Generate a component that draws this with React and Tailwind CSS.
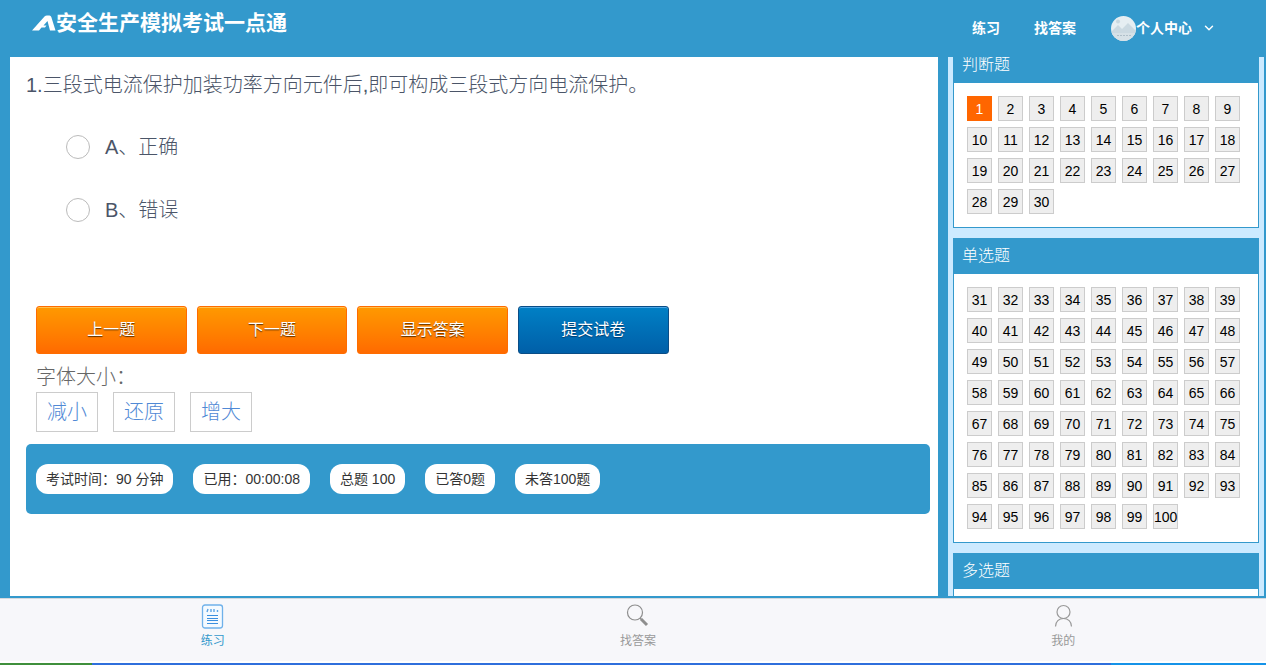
import React, { useState } from 'react';
import clsx from 'clsx';
import { ChevronDown } from 'lucide-react';

const range = (from, to) => Array.from({ length: to - from + 1 }, (_, i) => from + i);

const sections = [
  { title: '判断题', numbers: range(1, 30) },
  { title: '单选题', numbers: range(31, 100) },
  { title: '多选题', numbers: [] },
];

const options = [
  { key: 'A', label: '正确' },
  { key: 'B', label: '错误' },
];

const stats = ['考试时间：90 分钟', '已用：00:00:08', '总题 100', '已答0题', '未答100题'];

function LogoMark() {
  return (
    <svg className="w-6 h-4" viewBox="0 0 24 16" fill="#fff">
      <path d="M0 15.500L12.500 1.500Q13.500 .5 15 .5H17.500Q18.800 .5 19.300 2L23.500 15.500H18L15.500 6L11.500 10.500H14.500L13 12.500H9.500L7 15.500Z" />
    </svg>
  );
}

function Avatar() {
  return (
    <svg className="w-[25px] h-[25px]" viewBox="0 0 25 25">
      <defs>
        <clipPath id="avatar">
          <circle cx="12.500" cy="12.500" r="12.500" />
        </clipPath>
      </defs>
      <g clipPath="url(#avatar)">
        <rect width="25" height="25" fill="#e6eef2" />
        <circle cx="7" cy="5.500" r="2" fill="#c9d8e0" />
        <path d="M0 16L7 9l4 4 6-6 8 8v10H0z" fill="#cbd9e1" />
        <path d="M0 17h25v8H0z" fill="#d6e1e7" />
        <path d="M6 19.500h14" stroke="#afbfc9" strokeDasharray="2 1" />
      </g>
    </svg>
  );
}

function PaperIcon() {
  return (
    <svg className="w-[25px] h-[25px]" viewBox="0 0 25 25" fill="none">
      <rect x="2.500" y="1" width="20" height="23" rx="2.500" fill="#f4faff" stroke="#6fb1ea" strokeWidth="1.300" />
      <path d="M8 5l-1 3M11 5v3M14 5v3M17.500 6v2" stroke="#5ba4e6" strokeWidth="1.400" />
      <path d="M7 11.500h11M7 14.500h11M7 16.500h11M7 19.500h11" stroke="#3a8fe0" strokeWidth="1.200" />
    </svg>
  );
}

function SearchIcon() {
  return (
    <svg className="w-[25px] h-[25px]" viewBox="0 0 25 25" fill="none" stroke="#8e8e8e">
      <circle cx="10" cy="8.500" r="7.500" strokeWidth="1.200" />
      <path d="M15 14l2 2" strokeWidth="1.500" />
      <path d="M16 15l6 6" strokeWidth="3" />
    </svg>
  );
}

function UserIcon() {
  return (
    <svg className="w-[25px] h-[25px]" viewBox="0 0 25 25" fill="none" stroke="#999" strokeWidth="1.200">
      <circle cx="12.500" cy="8" r="6.500" />
      <path d="M4.500 22.500c0-5 3.500-8 8-8s8 3 8 8" />
    </svg>
  );
}

const tabs = [
  { label: '练习', icon: PaperIcon, active: true },
  { label: '找答案', icon: SearchIcon },
  { label: '我的', icon: UserIcon },
];

function ActionButton({ children, primary }) {
  return (
    <button
      className={clsx(
        'w-1/6 h-12 ml-2.5 rounded-[3px] border text-base text-white bg-linear-to-b',
        primary
          ? 'border-[#0a4d86] from-[#0080c5] to-[#005fa8] shadow-[inset_0_1px_0_#4aa5e6] [text-shadow:0_1px_1px_#003a6b]'
          : 'border-[#ff6c00] from-[#ff9900] to-[#ff6a00] shadow-[inset_0_1px_0_#ffc04d] [text-shadow:0_1px_1px_#5c3000]'
      )}
    >
      {children}
    </button>
  );
}

function NumberPanel({ title, numbers, current, onSelect }) {
  return (
    <section className="bg-white border border-t-0 border-[#3399cc]">
      <h2 className="h-9 px-2 leading-9 text-base font-light text-white bg-[#3399cc]">{title}</h2>
      <div className="flex flex-wrap gap-1.5 p-[13px]">
        {numbers.map((n) => (
          <button
            key={n}
            onClick={() => onSelect(n)}
            className={clsx(
              'w-[25px] h-[25px] border text-sm',
              n === current ? 'bg-[#ff6600] border-[#ff6600] text-white' : 'bg-[#eeeeee] border-[#cccccc] text-black'
            )}
          >
            {n}
          </button>
        ))}
      </div>
    </section>
  );
}

export default function App() {
  const [current, setCurrent] = useState(1);
  const [answer, setAnswer] = useState('');

  return (
    <div className="h-screen flex flex-col overflow-hidden bg-[#3399cc] font-['Liberation_Sans','Noto_Sans_CJK_SC',sans-serif]">
      <header className="h-[57px] shrink-0 flex justify-between pl-8 pr-[50px] text-white">
        <h1 className="h-[46px] flex items-center text-[21px] font-bold">
          <LogoMark />
          安全生产模拟考试一点通
        </h1>
        <nav className="flex items-center h-14 text-sm font-bold">
          <a href="#practice" className="mr-[34px]">练习</a>
          <a href="#search" className="mr-[35px]">找答案</a>
          <a href="#center" className="flex items-center">
            <Avatar />
            个人中心
            <ChevronDown className="ml-2.5 w-3.5 h-3.5" strokeWidth={2.5} />
          </a>
        </nav>
      </header>

      <div className="flex-1 min-h-0 flex gap-2.5 pl-2.5 pr-0.5">
        <main className="flex-1 min-w-0 bg-white pl-4 pr-2 pt-3 overflow-hidden">
          <p className="text-xl leading-8 font-light text-[#4b5568]">
            1.三段式电流保护加装功率方向元件后,即可构成三段式方向电流保护。
          </p>
          <div className="pl-10 pt-[31px] pb-[65px] flex flex-col gap-[33px]">
            {options.map((o) => (
              <label key={o.key} className="flex items-center text-xl leading-[30px] font-light text-[#4b5568]">
                <input
                  type="radio"
                  name="answer"
                  checked={answer === o.key}
                  onChange={() => setAnswer(o.key)}
                  className="appearance-none w-6 h-6 mr-[15px] rounded-full border border-[#bbbbbb] bg-white checked:border-8 checked:border-[#3399cc]"
                />
                {o.key}、{o.label}
              </label>
            ))}
          </div>
          <div className="flex pt-4">
            <ActionButton>上一题</ActionButton>
            <ActionButton>下一题</ActionButton>
            <ActionButton>显示答案</ActionButton>
            <ActionButton primary>提交试卷</ActionButton>
          </div>
          <div className="pl-2.5 pt-2">
            <p className="text-xl leading-[30px] font-light text-[#666666]">字体大小：</p>
            <div className="flex gap-[15px]">
              {['减小', '还原', '增大'].map((t) => (
                <button key={t} className="w-[62px] h-10 border border-[#cccccc] text-xl font-light text-[#5089d5]">
                  {t}
                </button>
              ))}
            </div>
          </div>
          <div className="mt-3 flex flex-wrap gap-5 px-2.5 py-5 rounded-[5px] bg-[#3399cc]">
            {stats.map((s) => (
              <span key={s} className="px-2.5 rounded-xl bg-white text-sm leading-[30px] text-[#333333]">{s}</span>
            ))}
          </div>
        </main>

        <aside className="w-[316px] shrink-0 px-[5px] bg-[#cceaff] overflow-hidden">
          <div className="-mt-2.5 flex flex-col gap-2.5">
            {sections.map((s) => (
              <NumberPanel key={s.title} {...s} current={current} onSelect={setCurrent} />
            ))}
          </div>
        </aside>
      </div>

      <footer className="shrink-0 mt-0.5 bg-white border-t border-[#d5d9de]">
        <nav className="grid grid-cols-3 w-[calc(100%+10px)] h-[62px] bg-[#f7f7fa]">
          {tabs.map(({ label, icon: Icon, active }) => (
            <a
              key={label}
              href="#tab"
              className={clsx(
                'flex flex-col items-center pt-[5px] text-xs leading-6',
                active ? 'text-[#3399cc]' : 'text-[#999999]'
              )}
            >
              <Icon />
              {label}
            </a>
          ))}
        </nav>
        <div className="flex h-1 pt-0.5">
          <div className="w-23 bg-[#3f8f3c]" />
          <div className="flex-1 bg-[#2f6fdc]" />
          <div className="w-[155px] bg-[#1593e8]" />
        </div>
      </footer>
    </div>
  );
}
